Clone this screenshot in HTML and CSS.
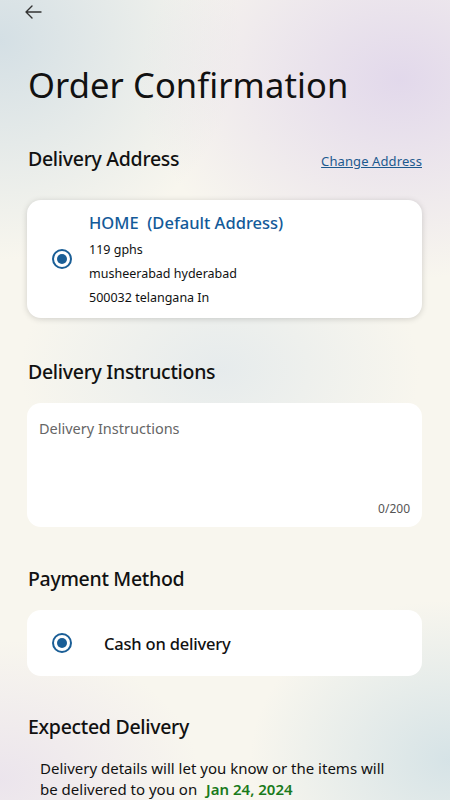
FILE: index.html
```html
<!DOCTYPE html>
<html>
<head>
<meta charset="utf-8">
<link rel="stylesheet" href="styles.css">
</head>
<body>
<div class="page">
  <div class="topbar">
    <svg class="back" width="20" height="16" viewBox="0 0 20 16"><path d="M18 8H3M9 2L3 8l6 6" fill="none" stroke="#333" stroke-width="1.4" stroke-linecap="round" stroke-linejoin="round"/></svg>
  </div>
  <h1 class="title">Order Confirmation</h1>

  <div class="section-head">
    <h2 class="heading">Delivery Address</h2>
    <a class="link">Change Address</a>
  </div>
  <div class="card address">
    <span class="radio"></span>
    <div class="addr-text">
      <div class="addr-title">HOME&nbsp;&nbsp;(Default Address)</div>
      <div class="addr-line">119 gphs</div>
      <div class="addr-line">musheerabad hyderabad</div>
      <div class="addr-line">500032 telangana In</div>
    </div>
  </div>

  <h2 class="heading h-instr">Delivery Instructions</h2>
  <div class="card instr">
    <div class="placeholder">Delivery Instructions</div>
    <div class="counter">0/200</div>
  </div>

  <h2 class="heading h-pay">Payment Method</h2>
  <div class="card pay">
    <span class="radio"></span>
    <span class="pay-text">Cash on delivery</span>
  </div>

  <h2 class="heading h-exp">Expected Delivery</h2>
  <p class="exp-text">Delivery details will let you know or the items will be delivered to you on <span class="date">Jan 24, 2024</span></p>
</div>
</body>
</html>
```
FILE: styles.css
```css
* { box-sizing: border-box; }
html, body { margin: 0; padding: 0; }
body {
  width: 450px;
  height: 800px;
  overflow: hidden;
  font-family: "Noto Sans", sans-serif;
  color: #111;
  background:
    radial-gradient(ellipse 260px 200px at 400px 80px, rgba(225,215,235,0.95), rgba(225,215,235,0) 100%),
    radial-gradient(ellipse 240px 220px at 0px 40px, rgba(210,222,228,0.95), rgba(210,222,228,0) 100%),
    radial-gradient(ellipse 200px 140px at 220px 370px, rgba(228,234,236,0.9), rgba(228,234,236,0) 100%),
    radial-gradient(ellipse 200px 160px at 450px 760px, rgba(212,226,230,0.95), rgba(212,226,230,0) 100%),
    radial-gradient(ellipse 200px 140px at 0px 780px, rgba(232,224,236,0.8), rgba(232,224,236,0) 100%),
    #f8f6ee;
}
.page { padding: 0 28px; }
.topbar { height: 24px; padding-top: 4px; margin-left: -5px; }
.back { display: block; }
.title {
  margin: 37px 0 0;
  font-size: 34.5px;
  font-weight: 400;
  line-height: 48px;
  letter-spacing: 0.1px;
  color: #111;
}
.section-head {
  display: flex;
  justify-content: space-between;
  align-items: baseline;
  margin-top: 37px;
}
.heading {
  margin: 0;
  font-size: 19.5px;
  font-weight: 500;
  line-height: 26px;
  letter-spacing: -0.3px;
  color: #111;
}
.link {
  font-size: 13px;
  color: #1d5a8f;
  text-decoration: underline;
  letter-spacing: 0.1px;
}
.card {
  background: #fff;
  border-radius: 14px;
  margin-left: -1px;
}
.address {
  margin-top: 28px;
  height: 118px;
  display: flex;
  align-items: center;
  padding-left: 25px;
  box-shadow: 0 1px 6px rgba(0,0,0,0.16);
}
.radio {
  width: 20px; height: 20px;
  border: 2.5px solid #1a5e96;
  border-radius: 50%;
  position: relative;
  flex: none;
}
.radio::after {
  content: "";
  position: absolute;
  left: 50%; top: 50%;
  width: 10px; height: 10px;
  margin: -5px 0 0 -5px;
  border-radius: 50%;
  background: #1a5e96;
}
.addr-text { margin-left: 17px; margin-top: 3px; }
.addr-title {
  font-size: 16.5px;
  font-weight: 500;
  color: #135a99;
  line-height: 24px;
  margin-bottom: 3px;
}
.addr-line {
  font-size: 12.5px;
  line-height: 24px;
  color: #111;
}
.h-instr { margin-top: 41px; }
.instr {
  margin-top: 18px;
  height: 124px;
  padding: 15px 12px 10px 12px;
  display: flex;
  flex-direction: column;
  justify-content: space-between;
}
.placeholder { font-size: 14.5px; color: #666; }
.counter { align-self: flex-end; font-size: 12px; color: #555; }
.h-pay { margin-top: 39px; }
.pay {
  margin-top: 18px;
  height: 66px;
  display: flex;
  align-items: center;
  padding-left: 25px;
}
.pay-text {
  margin-left: 32px;
  font-size: 16.5px;
  font-weight: 500;
  color: #111;
  letter-spacing: -0.2px;
}
.h-exp { margin-top: 38px; }
.exp-text {
  margin: 18px 20px 0 12px;
  font-size: 15px;
  line-height: 21px;
  color: #111;
}
.date { color: #1a7a1a; font-weight: 600; margin-left: 5px; }
```
